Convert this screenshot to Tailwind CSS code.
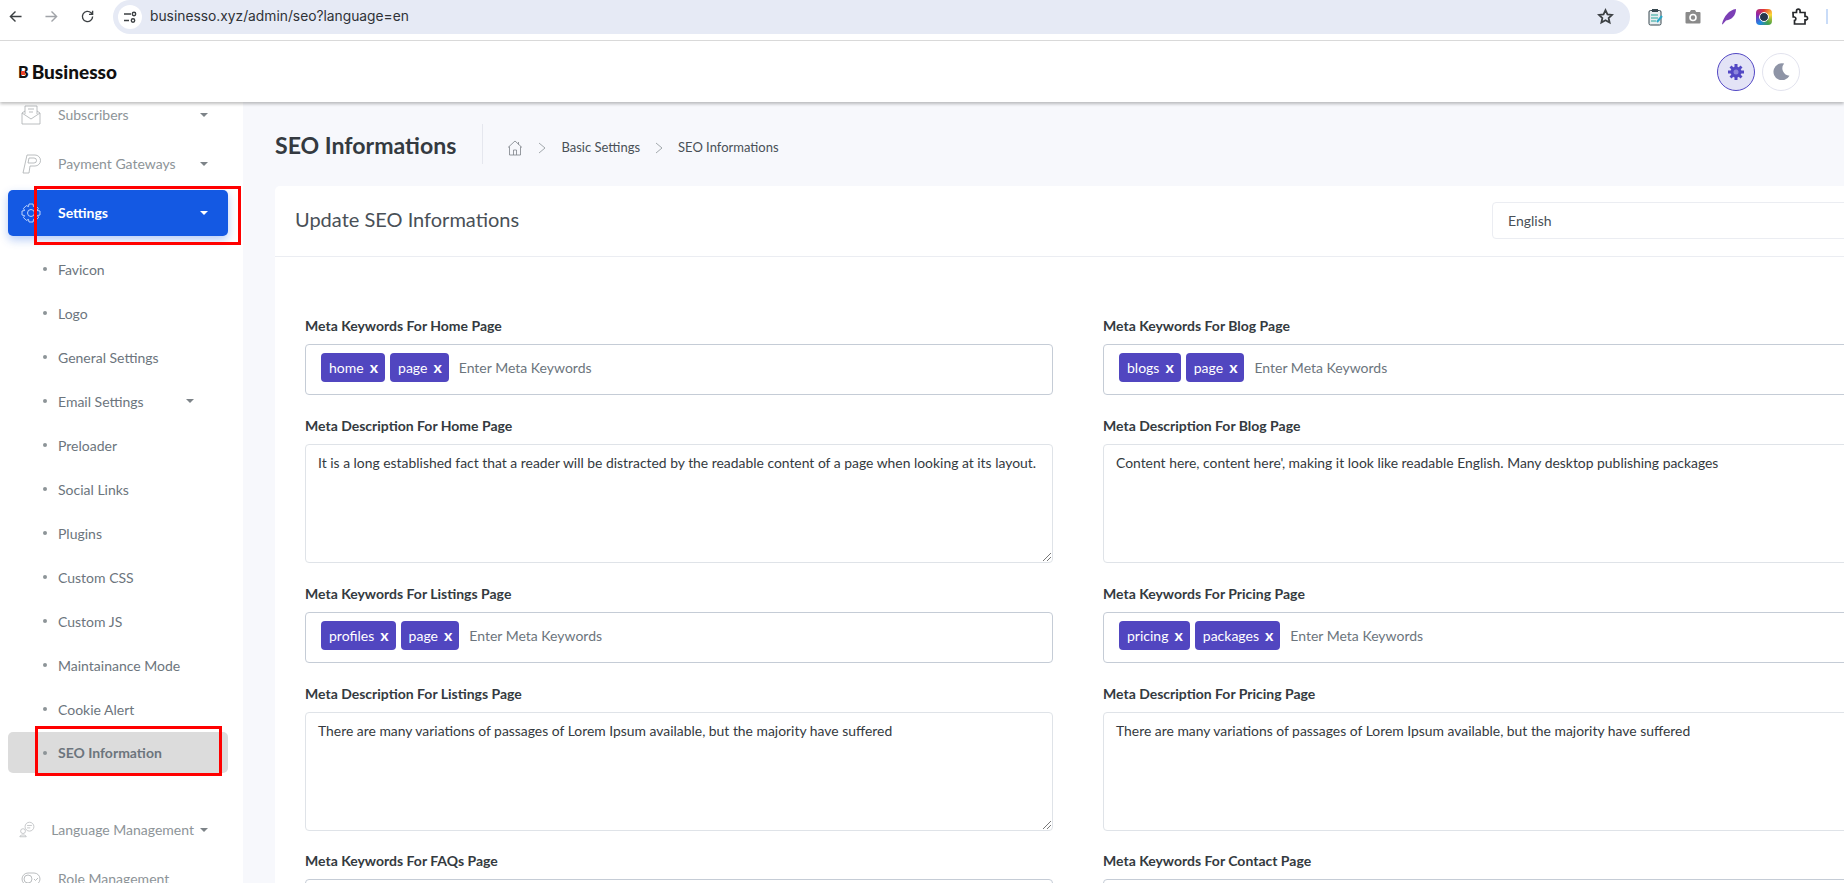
<!doctype html>
<html>
<head>
  <meta charset="UTF-8">
  <script src="https://cdn.jsdelivr.net/npm/@tailwindcss/browser@4"></script>
</head>
<body class="h-screen overflow-hidden bg-white font-['Lato',sans-serif] text-[#343a40]">
  <!-- Browser toolbar -->
  <div class="h-[41px] flex items-center border-b border-[#d9d9d9] bg-white relative z-30">
    <div class="w-[113px] shrink-0 h-[34px] -mt-[7px] flex items-center text-[#3c4043]">
      <svg class="ml-[9px] w-[13px] h-[13px]" viewBox="0 0 14 14" fill="none" stroke="currentColor" stroke-width="1.500"><path d="M13.500 7H1.500M7 1.500 1.500 7 7 12.500"/></svg>
      <svg class="ml-[23px] w-[13px] h-[13px] text-[#a0a3a8]" viewBox="0 0 14 14" fill="none" stroke="currentColor" stroke-width="1.500"><path d="M.5 7h12M7 1.500 12.500 7 7 12.500"/></svg>
      <svg class="ml-[23px] w-[13px] h-[13px]" viewBox="0 0 14 14" fill="none" stroke="currentColor" stroke-width="1.500"><path d="M12.500 7A5.500 5.500 0 1 1 10.800 3L12.500 4.700M12.500.8v3.900H8.600"/></svg>
    </div>
    <div class="w-[1517px] h-[34px] -mt-[7px] bg-[#e6eaf5] rounded-[17px] flex items-center pl-[5px]">
      <div class="w-[24px] h-[24px] rounded-full bg-white flex items-center justify-center">
        <svg class="w-[14px] h-[14px] text-[#3c4043]" viewBox="0 0 14 14" fill="none" stroke="currentColor" stroke-width="1.400"><path d="M1 4h7M1 10.500h5"/><circle cx="11" cy="4" r="1.700"/><circle cx="10" cy="10.500" r="1.700"/></svg>
      </div>
      <span class="ml-[8px] font-['Inter',sans-serif] text-[13.800px] text-[#2f3237]">businesso.xyz/admin/seo?language=en</span>
      <svg class="ml-auto mr-[16px] w-[17px] h-[17px] text-[#3c4043]" viewBox="0 0 24 24" fill="none" stroke="currentColor" stroke-width="2.500"><path d="M12 3l2.800 6 6.500.7-4.900 4.400 1.400 6.400L12 17.200l-5.800 3.300 1.400-6.400-4.900-4.400 6.500-.7z"/></svg>
    </div>
    <div class="flex items-center -mt-[7px] ml-[18px]">
      <svg class="w-[16px] h-[18px]" viewBox="0 0 16 18" fill="none"><rect x="1" y="2.500" width="12" height="14.500" rx="1.500" fill="#e8eef0" stroke="#37474f"/><rect x="4" y="1" width="6" height="3" fill="#37474f"/><path d="M3 7h7M3 10h7M3 13h5" stroke="#26a69a"/><path d="M9 14l5-6" stroke="#29a8c9" stroke-width="2"/></svg>
      <svg class="ml-[21px] w-[16px] h-[15px]" viewBox="0 0 16 15"><path d="M1.500 3h3.300L6 1h4l1.200 2h3.300A1 1 0 0 1 15.500 4v9.500a1 1 0 0 1-1 1h-13a1 1 0 0 1-1-1V4a1 1 0 0 1 1-1z" fill="#8a8a8a"/><circle cx="8" cy="8.500" r="3" fill="none" stroke="#fff" stroke-width="1.600"/></svg>
      <svg class="ml-[20px] w-[16px] h-[17px]" viewBox="0 0 16 17"><path d="M1 16C3 8 8 2 15 1c0 6-4 11-10 11.500L1.500 16.500z" fill="#7b3fb5"/></svg>
      <div class="ml-[19px] w-[16px] h-[16px] rounded-[4px] bg-[conic-gradient(#e53935,#fdd835,#43a047,#1e88e5,#8e24aa,#e53935)] flex items-center justify-center"><div class="w-[10px] h-[10px] rounded-full bg-[#26374d] border border-white"></div></div>
      <svg class="ml-[20px] w-[17px] h-[17px]" viewBox="0 0 17 17" fill="none" stroke="#26282b" stroke-width="1.700"><path d="M1 4.500h3.500V3a1.800 1.800 0 0 1 3.600 0v1.500H13v4h1.500a1.800 1.800 0 0 1 0 3.300H13V16H2.500v-3.500a1.800 1.800 0 0 0 0-3.500H1.200z"/></svg>
      <div class="ml-[17px] w-[2px] h-[15px] bg-[#c9dcf8]"></div>
    </div>
  </div>

  <!-- App header -->
  <div class="h-[61px] bg-white flex items-center shadow-[0_2px_3px_rgba(0,0,0,0.25)] relative z-20">
    <div class="ml-[18px] flex items-center font-black text-[19px] leading-none text-[#111]">
      <span class="relative mr-[3px] text-[16px] leading-none">B<span class="absolute left-[3px] top-[7px] w-[4px] h-[4px] bg-[#e8432d]"></span></span>Businesso
    </div>
    <div class="ml-auto flex items-center mr-[44px] gap-[7px]">
      <div class="w-[38px] h-[38px] rounded-full bg-[#e3e3f6] border border-[#5247c4] flex items-center justify-center">
        <svg class="w-[16px] h-[16px]" viewBox="0 0 16 16" fill="#5247c4"><circle cx="8" cy="8" r="5.500"/><circle cx="8" cy="8" r="2.500" fill="#8c86dc"/><path d="M6.500 0h3v3h-3zM6.500 13h3v3h-3zM0 6.500h3v3H0zM13 6.500h3v3h-3zM1.500 3.500l2-2 2 2-2 2zM10.500 3.500l2-2 2 2-2 2zM1.500 12.500l2-2 2 2-2 2zM10.500 12.500l2-2 2 2-2 2z"/></svg>
      </div>
      <div class="w-[38px] h-[38px] rounded-full bg-white border border-[#e2e3ee] flex items-center justify-center">
        <svg class="w-[17px] h-[17px]" viewBox="0 0 16 16" fill="#8e94a6"><path d="M10.500 0.500A8 8 0 1 0 15.500 12 7 7 0 0 1 10.500 0.500z"/></svg>
      </div>
    </div>
  </div>

  <div class="flex h-[781px] overflow-hidden">
    <!-- Sidebar -->
    <aside class="w-[243px] shrink-0 bg-white text-[14px] text-[#8d9498] overflow-hidden relative">
      <div class="pl-[21px] pr-[35px] h-[49px] -mt-[12px] flex items-center">
        <svg class="w-[20px] h-[20px] mr-[17px] text-[#a9adb0]" viewBox="0 0 20 20" fill="none" stroke="currentColor" stroke-width=".8"><path d="M1 8v11h18V8L10 14zM1 8l3-2M19 8l-3-2M4 9V1h12v8M7 4h6M8 7h4"/></svg>
        <span>Subscribers</span>
        <span class="ml-auto w-0 h-0 border-x-[4px] border-x-transparent border-t-[4px] border-t-[#7d8388]"></span>
      </div>
      <div class="pl-[21px] pr-[35px] h-[49px] flex items-center">
        <svg class="w-[20px] h-[20px] mr-[17px] text-[#a9adb0]" viewBox="0 0 20 20" fill="none" stroke="currentColor" stroke-width=".8"><path d="M6 1h8a5 5 0 0 1 0 11H9l-1 7H2zM8 4h5a2.500 2.500 0 0 1 0 5H7z"/></svg>
        <span>Payment Gateways</span>
        <span class="ml-auto w-0 h-0 border-x-[4px] border-x-transparent border-t-[4px] border-t-[#7d8388]"></span>
      </div>
      <div class="ml-[8px] w-[220px] h-[46px] mt-[2px] pl-[13px] pr-[20px] rounded-[5px] bg-[#1459e3] shadow-[0_4px_10px_rgba(20,89,227,0.3)] text-white font-bold flex items-center">
        <svg class="w-[20px] h-[20px] mr-[17px]" viewBox="0 0 20 20" fill="none" stroke="#cfe0ff" stroke-width=".9"><path d="M8 1h4l.5 2.500 2-.9 2.800 2.800-1.200 2.100L19 8v4l-2.500.5 1 2.100-2.800 2.800-2.100-1.100L12 19H8l-.5-2.600-2.200 1-2.800-2.800 1.100-2L1 12V8l2.600-.5-1.100-2.100L5.300 2.600l2.200 1z"/><circle cx="10" cy="10" r="3.500"/></svg>
        <span class="-mt-[1px]">Settings</span>
        <span class="ml-auto w-0 h-0 border-x-[4px] border-x-transparent border-t-[4px] border-t-white"></span>
      </div>
      <ul class="mt-[11px] text-[#6c757d]">
        <li class="h-[44px] pl-[43px] flex items-center"><span class="w-[4px] h-[4px] rounded-full bg-[#8d9498] mr-[11px]"></span>Favicon</li>
        <li class="h-[44px] pl-[43px] flex items-center"><span class="w-[4px] h-[4px] rounded-full bg-[#8d9498] mr-[11px]"></span>Logo</li>
        <li class="h-[44px] pl-[43px] flex items-center"><span class="w-[4px] h-[4px] rounded-full bg-[#8d9498] mr-[11px]"></span>General Settings</li>
        <li class="h-[44px] pl-[43px] pr-[49px] flex items-center"><span class="w-[4px] h-[4px] rounded-full bg-[#8d9498] mr-[11px]"></span>Email Settings<span class="ml-auto w-0 h-0 border-x-[4px] border-x-transparent border-t-[4px] border-t-[#7d8388]"></span></li>
        <li class="h-[44px] pl-[43px] flex items-center"><span class="w-[4px] h-[4px] rounded-full bg-[#8d9498] mr-[11px]"></span>Preloader</li>
        <li class="h-[44px] pl-[43px] flex items-center"><span class="w-[4px] h-[4px] rounded-full bg-[#8d9498] mr-[11px]"></span>Social Links</li>
        <li class="h-[44px] pl-[43px] flex items-center"><span class="w-[4px] h-[4px] rounded-full bg-[#8d9498] mr-[11px]"></span>Plugins</li>
        <li class="h-[44px] pl-[43px] flex items-center"><span class="w-[4px] h-[4px] rounded-full bg-[#8d9498] mr-[11px]"></span>Custom CSS</li>
        <li class="h-[44px] pl-[43px] flex items-center"><span class="w-[4px] h-[4px] rounded-full bg-[#8d9498] mr-[11px]"></span>Custom JS</li>
        <li class="h-[44px] pl-[43px] flex items-center"><span class="w-[4px] h-[4px] rounded-full bg-[#8d9498] mr-[11px]"></span>Maintainance Mode</li>
        <li class="h-[44px] pl-[43px] flex items-center"><span class="w-[4px] h-[4px] rounded-full bg-[#8d9498] mr-[11px]"></span>Cookie Alert</li>
        <li class="ml-[8px] mt-[1px] w-[220px] h-[41px] pl-[35px] rounded-[5px] bg-[#dcdcdc] font-bold flex items-center"><span class="w-[4px] h-[4px] rounded-full bg-[#8d9498] mr-[11px]"></span>SEO Information</li>
      </ul>
      <div class="mt-[32px] pl-[19px] pr-[35px] h-[49px] flex items-center">
        <svg class="w-[19px] h-[19px] mr-[16px] text-[#a9adb0]" viewBox="0 0 20 20" fill="none" stroke="currentColor" stroke-width=".8"><circle cx="13" cy="6.500" r="5.500"/><path d="M10 5h6M10 8h4"/><circle cx="5" cy="12" r="3"/><path d="M1 19c0-3 8-3 8 0z"/></svg>
        <span class="whitespace-nowrap">Language Management</span>
        <span class="ml-[6px] w-0 h-0 border-x-[4px] border-x-transparent border-t-[4px] border-t-[#7d8388]"></span>
      </div>
      <div class="pl-[21px] h-[49px] flex items-center">
        <svg class="w-[20px] h-[20px] mr-[17px] text-[#a9adb0]" viewBox="0 0 20 20" fill="none" stroke="currentColor" stroke-width=".8"><rect x="1" y="4" width="18" height="12" rx="6"/><circle cx="7" cy="10" r="4"/><path d="m13 10 1.500 1.500L17 9"/></svg>
        <span>Role Management</span>
      </div>
    </aside>

    <!-- Main -->
    <main class="flex-1 min-w-0 bg-[#f7f8fc] pl-[32px] overflow-hidden">
      <div class="h-[84px] flex items-center">
        <h1 class="mt-[2px] text-[23.100px] font-bold text-[#343a40] whitespace-nowrap">SEO Informations</h1>
        <div class="ml-[26px] h-[40px] w-px bg-[#e5e7ee]"></div>
        <div class="ml-[24px] mt-[7px] flex items-center text-[13px] text-[#495057]">
          <svg class="w-[16px] h-[16px] text-[#7c8288]" viewBox="0 0 16 16" fill="none" stroke="currentColor" stroke-width=".8"><path d="M1 7.500 8 1l7 6.500M2.500 6.500V15h11V6.500M6.500 15v-5h3v5M11.500 2v2.500"/></svg>
          <svg class="ml-[15px] w-[8px] h-[12px] text-[#8d9498]" viewBox="0 0 8 12" fill="none" stroke="currentColor" stroke-width=".8"><path d="m1 1 6 5-6 5"/></svg>
          <span class="ml-[15px]">Basic Settings</span>
          <svg class="ml-[15px] w-[8px] h-[12px] text-[#8d9498]" viewBox="0 0 8 12" fill="none" stroke="currentColor" stroke-width=".8"><path d="m1 1 6 5-6 5"/></svg>
          <span class="ml-[15px]">SEO Informations</span>
        </div>
      </div>

      <div class="w-[1605px] bg-white rounded-[5px]">
        <div class="h-[71px] border-b border-[#ebedf2] pl-[20px] pr-[28px] flex items-center">
          <h2 class="-mt-[5px] text-[20px] text-[#495057] whitespace-nowrap">Update SEO Informations</h2>
          <div class="ml-auto -mt-[1px] w-[360px] h-[37px] rounded-[4px] border border-[#ebedf2] pl-[15px] flex items-center text-[14px] text-[#495057]">English</div>
        </div>
        <div class="pl-[30px] pt-[60px] grid grid-cols-[748px_748px] gap-x-[50px]">
          <div>
            <label class="block text-[14px] leading-[18px] font-bold text-[#343a40] mb-[9px]">Meta Keywords For Home Page</label>
            <div class="h-[51px] rounded-[4px] border border-[#c5ccd6] pl-[15px] pt-[8px] flex items-start gap-[5px] text-[14px]">
              <span class="h-[29px] pl-[8px] pr-[7px] rounded-[4px] bg-[#5146c0] text-white flex items-center">home<span class="ml-[6px] -mt-[1px] text-[16px] font-bold leading-none">x</span></span>
              <span class="h-[29px] pl-[8px] pr-[7px] rounded-[4px] bg-[#5146c0] text-white flex items-center">page<span class="ml-[6px] -mt-[1px] text-[16px] font-bold leading-none">x</span></span>
              <span class="ml-[5px] h-[29px] flex items-center text-[#6c757d]">Enter Meta Keywords</span>
            </div>
          </div>
          <div>
            <label class="block text-[14px] leading-[18px] font-bold text-[#343a40] mb-[9px]">Meta Keywords For Blog Page</label>
            <div class="h-[51px] rounded-[4px] border border-[#c5ccd6] pl-[15px] pt-[8px] flex items-start gap-[5px] text-[14px]">
              <span class="h-[29px] pl-[8px] pr-[7px] rounded-[4px] bg-[#5146c0] text-white flex items-center">blogs<span class="ml-[6px] -mt-[1px] text-[16px] font-bold leading-none">x</span></span>
              <span class="h-[29px] pl-[8px] pr-[7px] rounded-[4px] bg-[#5146c0] text-white flex items-center">page<span class="ml-[6px] -mt-[1px] text-[16px] font-bold leading-none">x</span></span>
              <span class="ml-[5px] h-[29px] flex items-center text-[#6c757d]">Enter Meta Keywords</span>
            </div>
          </div>

          <div class="mt-[22px]">
            <label class="block text-[14px] leading-[18px] font-bold text-[#343a40] mb-[9px]">Meta Description For Home Page</label>
            <div class="relative h-[119px] rounded-[4px] border border-[#dfe3e8] px-[12px] pt-[7px] text-[13.900px] leading-[21px] text-[#343a40]">It is a long established fact that a reader will be distracted by the readable content of a page when looking at its layout.
              <svg class="absolute right-[1px] bottom-[1px] w-[8px] h-[8px]" viewBox="0 0 8 8" stroke="#555" stroke-width=".8"><path d="M0 8 8 0M4 8l4-4"/></svg>
            </div>
          </div>
          <div class="mt-[22px]">
            <label class="block text-[14px] leading-[18px] font-bold text-[#343a40] mb-[9px]">Meta Description For Blog Page</label>
            <div class="relative h-[119px] rounded-[4px] border border-[#dfe3e8] px-[12px] pt-[7px] text-[13.900px] leading-[21px] text-[#343a40]">Content here, content here', making it look like readable English. Many desktop publishing packages</div>
          </div>

          <div class="mt-[22px]">
            <label class="block text-[14px] leading-[18px] font-bold text-[#343a40] mb-[9px]">Meta Keywords For Listings Page</label>
            <div class="h-[51px] rounded-[4px] border border-[#c5ccd6] pl-[15px] pt-[8px] flex items-start gap-[5px] text-[14px]">
              <span class="h-[29px] pl-[8px] pr-[7px] rounded-[4px] bg-[#5146c0] text-white flex items-center">profiles<span class="ml-[6px] -mt-[1px] text-[16px] font-bold leading-none">x</span></span>
              <span class="h-[29px] pl-[8px] pr-[7px] rounded-[4px] bg-[#5146c0] text-white flex items-center">page<span class="ml-[6px] -mt-[1px] text-[16px] font-bold leading-none">x</span></span>
              <span class="ml-[5px] h-[29px] flex items-center text-[#6c757d]">Enter Meta Keywords</span>
            </div>
          </div>
          <div class="mt-[22px]">
            <label class="block text-[14px] leading-[18px] font-bold text-[#343a40] mb-[9px]">Meta Keywords For Pricing Page</label>
            <div class="h-[51px] rounded-[4px] border border-[#c5ccd6] pl-[15px] pt-[8px] flex items-start gap-[5px] text-[14px]">
              <span class="h-[29px] pl-[8px] pr-[7px] rounded-[4px] bg-[#5146c0] text-white flex items-center">pricing<span class="ml-[6px] -mt-[1px] text-[16px] font-bold leading-none">x</span></span>
              <span class="h-[29px] pl-[8px] pr-[7px] rounded-[4px] bg-[#5146c0] text-white flex items-center">packages<span class="ml-[6px] -mt-[1px] text-[16px] font-bold leading-none">x</span></span>
              <span class="ml-[5px] h-[29px] flex items-center text-[#6c757d]">Enter Meta Keywords</span>
            </div>
          </div>

          <div class="mt-[22px]">
            <label class="block text-[14px] leading-[18px] font-bold text-[#343a40] mb-[9px]">Meta Description For Listings Page</label>
            <div class="relative h-[119px] rounded-[4px] border border-[#dfe3e8] px-[12px] pt-[7px] text-[13.900px] leading-[21px] text-[#343a40]">There are many variations of passages of Lorem Ipsum available, but the majority have suffered
              <svg class="absolute right-[1px] bottom-[1px] w-[8px] h-[8px]" viewBox="0 0 8 8" stroke="#555" stroke-width=".8"><path d="M0 8 8 0M4 8l4-4"/></svg>
            </div>
          </div>
          <div class="mt-[22px]">
            <label class="block text-[14px] leading-[18px] font-bold text-[#343a40] mb-[9px]">Meta Description For Pricing Page</label>
            <div class="relative h-[119px] rounded-[4px] border border-[#dfe3e8] px-[12px] pt-[7px] text-[13.900px] leading-[21px] text-[#343a40]">There are many variations of passages of Lorem Ipsum available, but the majority have suffered</div>
          </div>

          <div class="mt-[21px]">
            <label class="block text-[14px] leading-[18px] font-bold text-[#343a40] mb-[9px]">Meta Keywords For FAQs Page</label>
            <div class="h-[51px] rounded-[4px] border border-[#c5ccd6]"></div>
          </div>
          <div class="mt-[21px]">
            <label class="block text-[14px] leading-[18px] font-bold text-[#343a40] mb-[9px]">Meta Keywords For Contact Page</label>
            <div class="h-[51px] rounded-[4px] border border-[#c5ccd6]"></div>
          </div>
        </div>
      </div>
    </main>
  </div>

  <!-- Red annotation boxes drawn over the screenshot -->
  <div class="absolute left-[34px] top-[186px] w-[207px] h-[59px] border-[3px] border-[#f00] z-40"></div>
  <div class="absolute left-[35px] top-[726px] w-[187px] h-[50px] border-[3px] border-[#f00] z-40"></div>
</body>
</html>
